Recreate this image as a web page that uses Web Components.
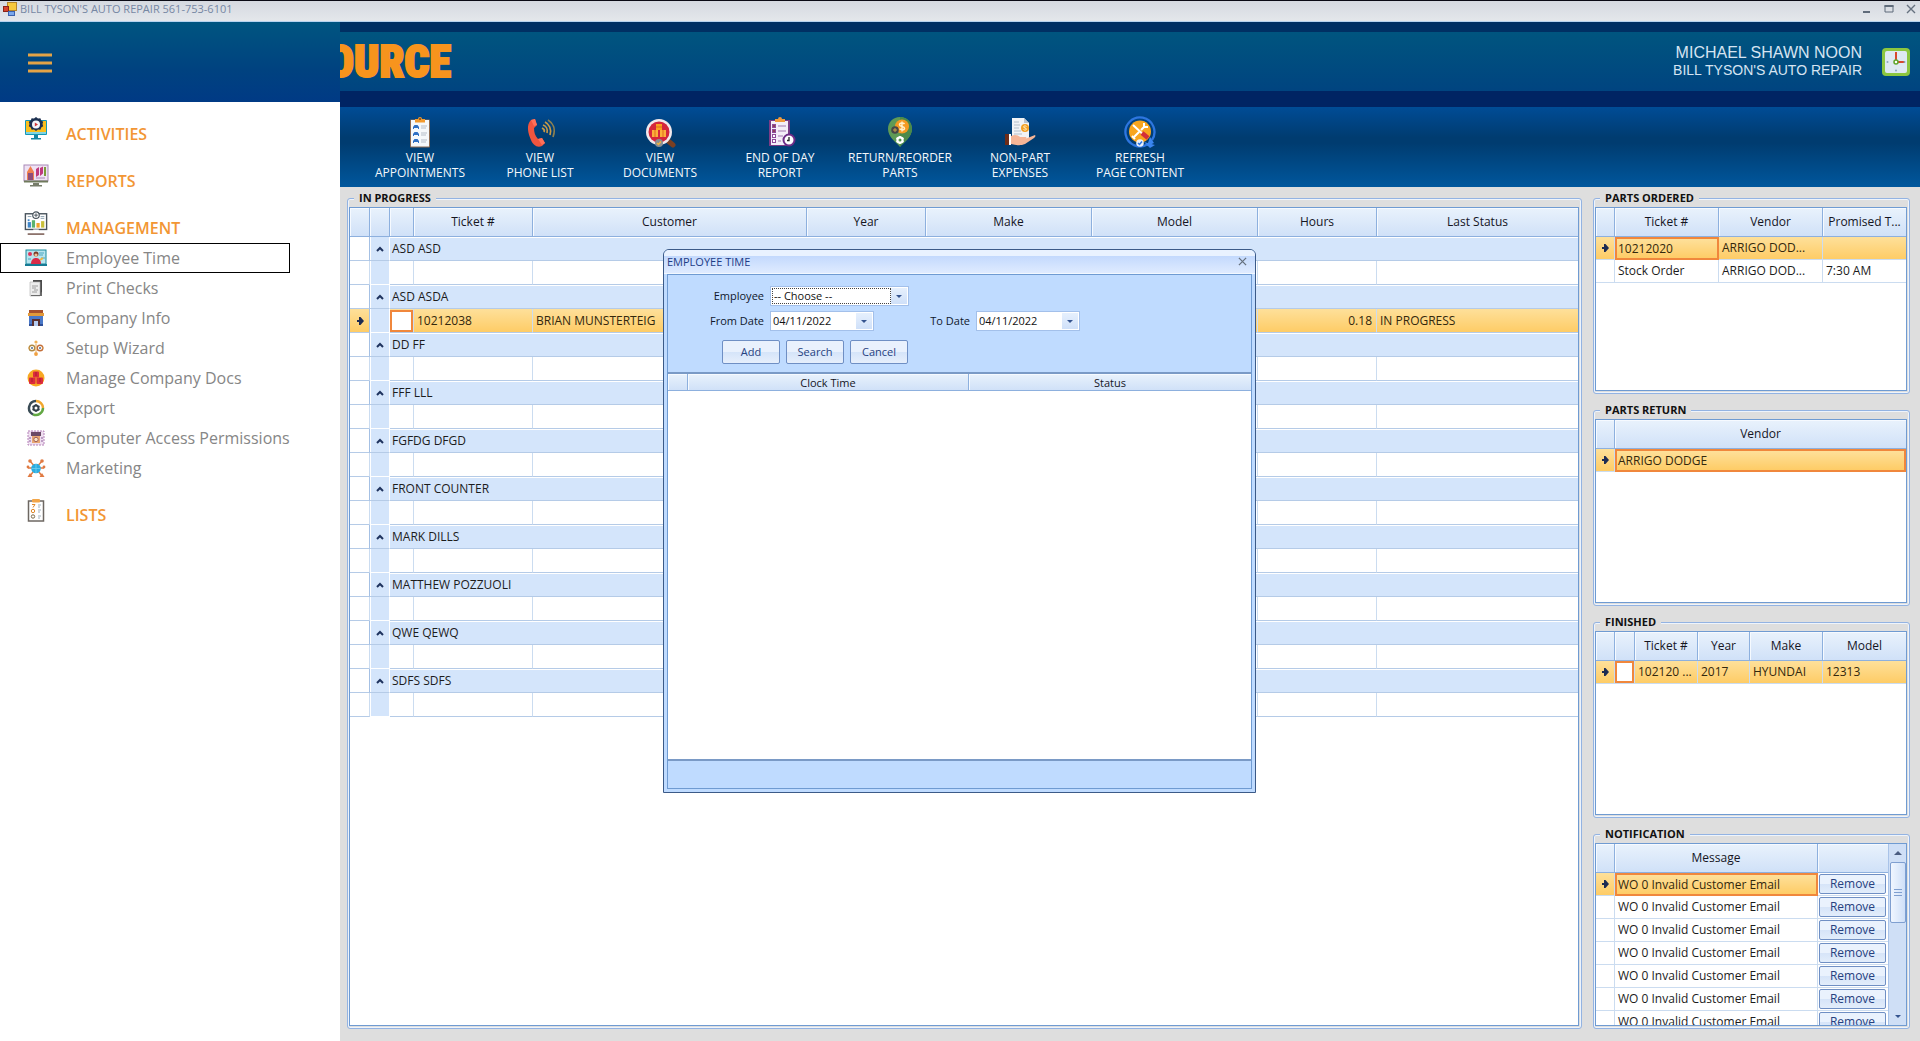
<!DOCTYPE html>
<html lang="en">
<head>
<meta charset="utf-8">
<title>Auto Repair</title>
<style>
html,body{margin:0;height:100%}
body{font:12px/16px "Open Sans","Noto Sans",sans-serif;color:#1c1c1c;background:#dedede;overflow:hidden}
</style>
</head>
<body>
<shop-app></shop-app>
<script>
const ICONS = {
  activities: ['0 0 24 24', `<rect x="1" y="3" width="22" height="15" rx="1" fill="#1597b5"/><rect x="2" y="4" width="20" height="11" fill="#fbbf1c"/><rect x="2" y="15" width="20" height="2" fill="#7fd4e2"/><path d="M10 18h4v3h3v1.500H7V21h3z" fill="#1586a4"/><path d="M12 0l2 1.500 2.400-.2.800 2.300 2 1.200-.7 2.200.7 2.200-2 1.200-.8 2.300-2.400-.2L12 14l-2-1.500-2.400.2-.8-2.300-2-1.200.7-2.200-.7-2.200 2-1.200.8-2.300 2.400.2z" fill="#1c3050"/><circle cx="12" cy="7.500" r="4" fill="#f2f6fb"/><path d="M10.800 5.500l3.200 2-3.200 2z" fill="#d03a3a"/>`],
  reports: ['0 0 26 24', `<rect x="1" y="1" width="24" height="16" fill="#efe2f4" stroke="#a98ab8"/><path d="M4 16V8l3.500-6L11 8v8z" fill="#f08050"/><path d="M5 16V9h5v7z" fill="#8f4d7a"/><path d="M13 5l3-2v8l-3 2zM17 4l3-1.500v7L17 12z" fill="#c0397e"/><path d="M21 3h2v9h-2z" fill="#7b9c3a"/><path d="M13 14h9" stroke="#a98ab8"/><path d="M1 17.500h24" stroke="#6f7a5c" stroke-width="2"/><path d="M10 19h6v2h3v1.500H7V21h3z" fill="#777d6a"/>`],
  management: ['0 0 26 26', `<rect x="1.500" y="3" width="23" height="17" fill="#fff" stroke="#48535c" stroke-width="1.500"/><g fill="#3f86c9"><rect x="4" y="12" width="3.500" height="6"/><rect x="4" y="9" width="2" height="2"/></g><rect x="8.500" y="10" width="3.500" height="8" fill="#5bb36d"/><rect x="13.500" y="13" width="3.500" height="5" fill="#f2a32c"/><rect x="18.500" y="11" width="3.500" height="7" fill="#c9c03a"/><path d="M4 6h4M18 6h4M18 8h4" stroke="#8aa0b0"/><circle cx="13" cy="4.500" r="3.500" fill="#fff" stroke="#48535c" stroke-width="1.300"/><path d="M13 2.500v4M11 4.500h4" stroke="#48535c"/><path d="M10 20h6v3h-6z" fill="#fff"/><path d="M4 25h18" stroke="#6b4a40" stroke-width="1.500"/>`],
  lists: ['0 0 18 24', `<rect x="1.500" y="3" width="15" height="20" fill="#fff" stroke="#6d6762" stroke-width="1.500"/><rect x="5" y="1" width="8" height="3.500" rx="1" fill="#f2a64a"/><path d="M5 6.500h3L6 9.500" stroke="#e08a2c" fill="none"/><circle cx="6" cy="13" r="1.700" fill="none" stroke="#e08a2c"/><circle cx="6" cy="18.500" r="1.700" fill="none" stroke="#7b6a4a"/><path d="M11 7h3M11 9h2M11 12h3M11 14h2M11 18h3M11 20h2" stroke="#9fb0bd"/>`],
  employee: ['0 0 22 18', `<rect x="1" y="1" width="20" height="14" fill="#b9e4ee" stroke="#188a9c"/><circle cx="5" cy="5" r="2" fill="#e0345a"/><path d="M14 4h5M14 6h4M16 9h4M3 10h3" stroke="#4aa7c0"/><circle cx="11" cy="5" r="2.500" fill="#7a3b28"/><circle cx="11" cy="6" r="1.600" fill="#f2c197"/><path d="M6 15c0-5 3-6 5-6s5 1 5 6z" fill="#d92c48"/><path d="M15 11l3-2" stroke="#f0b53c" stroke-width="2"/><path d="M0 15h22v2H0z" fill="#167a94"/>`],
  checks: ['0 0 18 18', `<path d="M6 1h9v13h-2V3H6z" fill="#4a4a4a"/><path d="M3 3h10v14H3z" fill="#ececec" stroke="#b0b0b0" stroke-width=".6"/><path d="M13 14l2-1v4H4v-1h9z" fill="#6a6a6a"/><path d="M5 7h6M5 9h4M7 11h4M5 13h5" stroke="#8b8b8b" stroke-width=".8"/>`],
  company: ['0 0 18 18', `<path d="M2 1h14v6H2z" fill="#a8502c"/><path d="M1 4h16v3H1z" fill="#e29a3a"/><path d="M2 7h14v10H2z" fill="#4a78c8"/><path d="M5 10h8v7H5z" fill="#5b3030"/><path d="M7 12h4v5H7z" fill="#b6cdf2"/><path d="M2 15h3v2H2zM13 15h3v2h-3z" fill="#2f4f98"/>`],
  wizard: ['0 0 18 18', `<g fill="none" stroke-width="1.400"><circle cx="5" cy="9" r="2.800" stroke="#b18a42"/><circle cx="13" cy="9" r="2.800" stroke="#c4703a"/></g><circle cx="5" cy="9" r="1" fill="#4c6c90"/><circle cx="13" cy="9" r="1" fill="#4c6c90"/><circle cx="9" cy="3" r="1.600" fill="#f0b054"/><circle cx="9" cy="15" r="1.900" fill="#f0a040"/><path d="M9 5v8M1 9h2M15 9h2" stroke="#e2a85c"/>`],
  docs: ['0 0 18 18', `<circle cx="9" cy="9" r="8.500" fill="#f7a823"/><g fill="#dc2c3c"><rect x="6" y="2.500" width="6" height="6" rx="1"/><rect x="2" y="8.500" width="6.500" height="6.500" rx="1"/><rect x="9.500" y="8.500" width="6.500" height="6.500" rx="1"/></g><path d="M9 3v4M5 9v4M13 9v4" stroke="#a81a30"/>`],
  export: ['0 0 18 18', `<g fill="none" stroke-width="2.500"><path d="M9 2a7 7 0 0 1 7 7" stroke="#f2a72e"/><path d="M16 9a7 7 0 0 1-10 6.300" stroke="#62a843"/><path d="M6 15.300A7 7 0 0 1 9 2" stroke="#3a4b55"/></g><circle cx="9" cy="9" r="2.500" fill="#fff" stroke="#333f48" stroke-width="2"/><path d="M9 5v1.500M9 11.500V13M5.500 7l1.300.8M11.200 10.200l1.300.8M5.500 11l1.300-.8M11.200 7.800l1.300-.8" stroke="#333f48" stroke-width="1.400"/>`],
  access: ['0 0 18 18', `<rect x="1" y="2" width="16" height="14" fill="#efdff0" stroke="#b481b8" stroke-dasharray="2 1"/><rect x="4" y="3" width="10" height="4" fill="#6b4a66"/><rect x="5" y="7" width="8" height="7" fill="#e9a873"/><circle cx="9" cy="10.500" r="2.200" fill="#fbe6c6" stroke="#a0605a"/><path d="M2 9h2M14 9h2M2 12h2M14 12h2" stroke="#8a5f9a"/>`],
  marketing: ['0 0 20 20', `<path d="M10 10L4 3M10 10l6-7M10 10H2M10 10h8M10 10l-6 8M10 10l6 8" stroke="#e07a42" stroke-width="1.400"/><g fill="#e07a42"><circle cx="4" cy="3" r="1.800"/><circle cx="16" cy="3" r="1.800"/><circle cx="2" cy="9" r="1.400"/><circle cx="18" cy="9" r="1.400"/><path d="M1.500 19l2.500-4 2.500 4zM13.500 19l2.500-4 2.500 4z"/></g><circle cx="10" cy="10.500" r="4.800" fill="#2bacdf"/><path d="M5.500 10.500h9M10 6v9" stroke="#6fd0f2" stroke-width=".8"/>`],
  appointments: ['0 0 32 32', `<rect x="6" y="3.500" width="20" height="28" rx="1" fill="#8d6a52"/><rect x="7" y="4" width="18" height="26.500" fill="#f6f8fb"/><path d="M11 3h3a2 2 0 0 1 4 0h3v3.500H11z" fill="#f39a2e"/><circle cx="16" cy="3" r="1" fill="#7a4a1e"/><g fill="#2f6fc4"><path d="M9 13v-2l1.500-2h3L15 11v2h-1v-1h-4v1zM9 20v-2l1.500-2h3L15 18v2h-1v-1h-4v1zM9 27v-2l1.500-2h3L15 25v2h-1v-1h-4v1z"/></g><path d="M17 10h6M17 12h5M17 17h6M17 19h5M17 24h6M17 26h5" stroke="#b5bdc9"/>`],
  phone: ['0 0 32 32', `<path d="M7 4l4-1 2 6-3 3c0 4 1 8 4 11l4-1 3 5-3 3c-5 2-9-1-11-6C4 17 2 9 7 4z" fill="#f0553f"/><path d="M7 4l4-1 2 6-3 1zM14 23l4-1 3 5-3 2z" fill="#ff7059"/><g fill="none" stroke="#c89a46" stroke-width="1.700"><path d="M19 9c3 1 5 4 4 8M21 6c4 2 7 7 5 13M18 12c2 1 3 2 2 4"/><path d="M24 4c5 3 8 9 5 17" stroke="#8e8150"/></g>`],
  documents: ['0 0 32 32', `<path d="M23 24l6 5" stroke="#7a3f22" stroke-width="5" stroke-linecap="round"/><circle cx="15" cy="16" r="13" fill="#f2e9ec"/><circle cx="15" cy="16" r="10.500" fill="#d5263c"/><path d="M12 8h6v6h-6z" fill="#f9a01f"/><path d="M8 14h6v7H8zM16 14h6v7h-6z" fill="#fbb03b"/><path d="M12 11h6M11 14v7M19 14v7" stroke="#e36a1c"/><circle cx="15" cy="27" r="4" fill="#8b8f93"/><path d="M13 27l1.500 1.500L17 25.500" stroke="#f0b23c" stroke-width="1.500" fill="none"/>`],
  endday: ['0 0 32 32', `<rect x="5" y="4" width="21" height="26" fill="#7a3c86"/><rect x="7" y="5" width="17" height="24" fill="#f4eef8"/><path d="M11 3h3a2 2 0 0 1 4 0h3v3H11z" fill="#f09a3c"/><g fill="#fff" stroke="#8d4b9a"><rect x="8.500" y="8.500" width="3" height="3" fill="#8d4058"/><rect x="8.500" y="13.500" width="3" height="3" fill="#8d4058"/><rect x="8.500" y="18.500" width="3" height="3"/><rect x="8.500" y="23.500" width="3" height="3"/></g><path d="M14 10h8M14 15h8M14 20h5M14 25h3" stroke="#a078ae"/><circle cx="25" cy="24" r="5.500" fill="#fff" stroke="#6d2c86" stroke-width="2"/><path d="M25 21v3.500h-2" stroke="#222" fill="none" stroke-width="1.300"/>`],
  reorder: ['0 0 32 32', `<path d="M16 1c7 0 12 5 12 12 0 8-8 13-12 18C12 26 4 21 4 13 4 6 9 1 16 1z" fill="#5e9a56"/><path d="M16 1c7 0 12 5 12 12 0 8-8 13-12 18z" fill="#4b8a4a"/><circle cx="18" cy="10.500" r="7" fill="#f49a22"/><path d="M20.500 8c-1-1.500-5-1.500-5 .7s5 1.300 5 3.500-4 2-5 .5M18 5.500v10" stroke="#fff0c8" stroke-width="1.500" fill="none"/><circle cx="11" cy="14" r="3.800" fill="#474747"/><path d="M11 12v4M9 14h4" stroke="#c9a24a"/><circle cx="16" cy="24" r="2.600" fill="none" stroke="#fff" stroke-width="2.200"/><path d="M16 20v1.500M16 26.500V28M12.500 22l1.300.8M18.200 25.200l1.300.8M12.500 26l1.300-.8M18.200 22.800l1.300-.8" stroke="#fff" stroke-width="1.600"/>`],
  expenses: ['0 0 32 32', `<path d="M8 2h12l5 5v18H8z" fill="#f1f3f6"/><path d="M20 2l5 5h-5z" fill="#b9c3cf"/><path d="M10 6h5M10 9h6M10 12h5M10 15h7M10 18h8" stroke="#b4bfcb"/><circle cx="21" cy="12" r="4" fill="#f3a024"/><path d="M22.500 10.500c-1-1-3-.6-3 .5s3 .8 3 2-2 1.500-3 .5" stroke="#fff3cf" fill="none"/><path d="M1 18h6v11H1z" fill="#6d2c18"/><path d="M5 18h2v11H5z" fill="#fff"/><path d="M7 20c4-2 7-1 9 1h6c1 1 0 2-1 2l10-4c1 1 0 2-1 3l-9 6c-5 2-9 1-14 0z" fill="#f6b596"/>`],
  refresh: ['0 0 32 32', `<path d="M24 28A14.500 14.500 0 1 1 28 24" fill="none" stroke="#2d76e0" stroke-width="2.300"/><path d="M20 26l11 3-5 3z" fill="#3b86f0"/><path d="M26 21l4 6-7 3z" fill="#3b86f0"/><circle cx="16" cy="15.500" r="11" fill="#f8a51f"/><path d="M9 9l13 12M10 21l5-5" stroke="#fff" stroke-width="2"/><path d="M18 17l6 5" stroke="#d32f3a" stroke-width="4.500"/><path d="M17 14l4-4M20 7v4h4M8 20l3 3" stroke="#fff" stroke-width="2" fill="none"/><circle cx="16" cy="27" r="3.800" fill="#e9f1fb"/><path d="M14 27l1.500 1.500L18 25.500" stroke="#2d76e0" stroke-width="1.500" fill="none"/>`],
  clock: ['0 0 30 30', `<rect x="1" y="1" width="28" height="28" rx="4" fill="#8cc63f"/><rect x="4" y="4" width="22" height="22" rx="2" fill="#dfe9f2"/><path d="M15 5v10h9" stroke="#d9482c" stroke-width="2" fill="none"/><circle cx="15" cy="15" r="2" fill="#fff" stroke="#5fa52c" stroke-width="1.500"/><g fill="#8ba6bd"><circle cx="6.500" cy="15" r="1"/><circle cx="23.500" cy="15" r="1"/><circle cx="15" cy="23.500" r="1"/></g>`],
  app: ['0 0 14 14', `<rect x="4.500" y=".5" width="9" height="8" fill="#f6c83c" stroke="#b6852a"/><rect x=".5" y="4.500" width="5" height="5" fill="#d8432c" stroke="#8a2418"/><rect x="5.500" y="9.500" width="6" height="4" fill="#7aa7ec" stroke="#3b62ad"/>`],
  burger: ['0 0 24 20', `<path d="M0 2h24M0 10h24M0 18h24" stroke="#e4a346" stroke-width="3"/>`],
  arrow: ['0 0 8 8', `<path d="M1 4h4" stroke="#1d2b52" stroke-width="2"/><path d="M3 0h1.500l3.500 4-3.500 4H3z" fill="#1d2b52"/>`],
  chevron: ['0 0 8 6', `<path d="M1 5l3-3 3 3" stroke="#1f335e" stroke-width="2" fill="none"/>`],
  down: ['0 0 8 8', `<path d="M1 3h6L4 6z" fill="#35548f"/>`],
  up: ['0 0 8 8', `<path d="M0 6h8L4 2z" fill="#4a5c80"/>`],
  minimize: ['0 0 10 10', `<path d="M1 8h7" stroke="#5f6b7a" stroke-width="2"/>`],
  maximize: ['0 0 10 10', `<path d="M1 1.500h8V8H1z" stroke="#5f6b7a" fill="none"/><path d="M.5 2h9" stroke="#5f6b7a" stroke-width="2"/>`],
  close: ['0 0 10 10', `<path d="M1 1l8 8M9 1l-8 8" stroke="#66717f" stroke-width="1.400"/>`]
};

class Base extends HTMLElement {
  connectedCallback() {
    if (this.shadowRoot) return;
    this.attachShadow({mode: 'open'}).innerHTML =
      `<style>*{box-sizing:border-box}:host{display:block;box-sizing:border-box}button,input,select{font:inherit;margin:0}${this.css()}</style>${this.html()}`;
  }
  css() { return ''; }
  html() { return '<slot></slot>'; }
  at(n) { return this.getAttribute(n) || ''; }
}
const define = (name, cls) => customElements.define(name, cls);

define('app-icon', class extends Base {
  css() { return `:host{display:inline-block;flex:none;width:${this.at('w')}px;height:${this.at('h') || this.at('w')}px}svg{display:block;width:100%;height:100%}`; }
  html() { const [box, body] = ICONS[this.at('name')]; return `<svg viewBox="${box}" aria-hidden="true">${body}</svg>`; }
});

define('title-bar', class extends Base {
  css() { return `:host{display:flex;align-items:center;height:22px;padding:0 4px 4px 3px;gap:3px;border-top:1px solid #0a0a14;border-bottom:1px solid #b7d3ee;background:linear-gradient(#d5d9e0,#e4e7eb);color:#7687a3}
  .name{flex:1;font-size:11px}nav{display:flex;gap:12px}button{border:0;background:none;padding:0;display:flex}`; }
  html() { return `<app-icon name="app" w="14"></app-icon><span class="name"><slot></slot></span>
  <nav><button aria-label="Minimize"><app-icon name="minimize" w="10"></app-icon></button><button aria-label="Maximize"><app-icon name="maximize" w="10"></app-icon></button><button aria-label="Close"><app-icon name="close" w="10"></app-icon></button></nav>`; }
});

define('nav-item', class extends Base {
  css() { return `a{display:flex;align-items:center;height:30px;width:290px;color:#868686;font-size:16px;text-decoration:none;white-space:nowrap;border:1px solid transparent}
  :host([current]) a{border-color:#000}.pic{width:65px;flex:none;padding-left:4px;display:flex;justify-content:center}`; }
  html() { return `<a href="#"><span class="pic"><app-icon name="${this.at('icon')}" w="${this.at('size') || 18}"></app-icon></span><slot></slot></a>`; }
});

define('nav-group', class extends Base {
  css() { return `h2{margin:0;display:flex;align-items:center;height:30px;font-size:16px;font-weight:600;color:#f29634}
  .pic{width:66px;padding:0 0 10px 5px;display:flex;justify-content:center}`; }
  html() { return `<h2><span class="pic"><app-icon name="${this.at('icon')}" w="${this.at('size') || 24}" h="24"></app-icon></span>${this.at('label')}</h2><slot></slot>`; }
});

define('nav-drawer', class extends Base {
  css() { return `:host{display:flex;flex-direction:column;width:340px;flex:none;background:#fff}
  header{height:80px;padding:2px 28px 0;display:flex;align-items:center;background:linear-gradient(#005580,#004280 60%,#003a85)}
  header button{border:0;background:none;padding:0;display:flex}
  nav{display:flex;flex-direction:column;gap:17px;padding-top:17px}`; }
  html() { return `<header><button aria-label="Menu"><app-icon name="burger" w="24" h="20"></app-icon></button></header><nav><slot></slot></nav>`; }
});

define('top-banner', class extends Base {
  css() { return `:host{display:flex;align-items:center;justify-content:space-between;height:85px;border-top:10px solid #003063;border-bottom:16px solid #002463;background:linear-gradient(#00557f,#004480);padding-right:9px;overflow:hidden}
  .logo{display:flex;justify-content:flex-end;width:111px;font:900 44px/48px "Roboto Condensed","Open Sans Condensed","Liberation Sans Narrow","Roboto",sans-serif;color:#f7941d;-webkit-text-stroke:2px #f7941d}
  .who{display:flex;align-items:center;gap:19px;color:#d6e4f2;font-family:"Liberation Sans",sans-serif;text-align:right}
  .big{font-size:16px;line-height:18px}.small{font-size:14px;line-height:17px}`; }
  html() { return `<div class="logo">SOURCE</div><div class="who"><div><div class="big">MICHAEL SHAWN NOON</div><div class="small">BILL TYSON'S AUTO REPAIR</div></div><app-icon name="clock" w="30"></app-icon></div>`; }
});

define('tool-button', class extends Base {
  css() { return `button{width:120px;height:80px;padding:9px 0 0;border:0;background:none;color:#f4f8fc;display:flex;flex-direction:column;align-items:center;gap:2px;font-size:12px;line-height:15px}span{display:block}`; }
  html() { return `<button><app-icon name="${this.at('icon')}" w="32"></app-icon><span><slot></slot></span></button>`; }
});
define('tool-strip', class extends Base {
  css() { return `:host{display:flex;height:80px;padding-left:20px;background:linear-gradient(#004c96,#003c70 38%,#003c70 45%,#00579d)}`; }
});

define('group-panel', class extends Base {
  css() { return `:host{min-width:0;min-height:0;display:grid}
  fieldset{min-width:0;margin:0;padding:1px 2px 2px 1px;border:1px solid #93b3e2;border-radius:3px;box-shadow:inset 0 0 0 1px #eef4fc;display:grid}
  legend{margin-left:5px;padding:0 5px;font-weight:700;font-size:11px;line-height:16px;color:#111;background:#dedede}`; }
  html() { return `<fieldset><legend>${this.at('label')}</legend><slot></slot></fieldset>`; }
});

const blank = n => Array(n).fill('');
const GRIDS = {
  progress: {
    cols: [['', 20], ['', 20], ['', 24], ['Ticket #', 119], ['Customer', 274], ['Year', 119], ['Make', 166], ['Model', 166], ['Hours', 119], ['Last Status', 0]],
    groups: [['ASD ASD'], ['ASD ASDA', ['10212038', 'BRIAN MUNSTERTEIG', '', '', '', '0.18', 'IN PROGRESS']], ['DD FF'], ['FFF LLL'], ['FGFDG DFGD'], ['FRONT COUNTER'], ['MARK DILLS'], ['MATTHEW POZZUOLI'], ['QWE QEWQ'], ['SDFS SDFS']]
  },
  ordered: {cols: [['', 19], ['Ticket #', 104], ['Vendor', 104], ['Promised T...', 0]], rows: [['10212020', 'ARRIGO DOD...', ''], ['Stock Order', 'ARRIGO DOD...', '7:30 AM']]},
  returned: {cols: [['', 19], ['Vendor', 0]], rows: [['ARRIGO DODGE']]},
  finished: {cols: [['', 19], ['', 20], ['Ticket #', 63], ['Year', 52], ['Make', 73], ['Model', 0]], rows: [['#check', '102120 ...', '2017', 'HYUNDAI', '12313']]},
  notes: {cols: [['', 19], ['Message', 0], ['', 70]], scroll: true, rows: Array.from({length: 7}, () => ['WO 0 Invalid Customer Email', '#remove'])},
  clock: {cols: [['', 20], ['Clock Time', 281], ['Status', 0]], rows: []}
};

define('data-grid', class extends Base {
  css() { return `:host{display:flex;min-width:0;min-height:0;overflow:hidden;background:#fff;border:1px solid #6f9bd2;contain:size}
  :host([name=clock]){flex:1;font-size:11px;border-width:2px 0 0;border-color:#7a9ac6}
  .view{flex:1;min-width:0;overflow:hidden}
  table{width:100%;table-layout:fixed;border-collapse:separate;border-spacing:0}
  th{height:29px;padding:0;font-weight:400;color:#15151f;background:linear-gradient(#e9f2fc,#d0e1f8);border-right:1px solid #8db0de;border-bottom:1px solid #8db0de;box-shadow:inset 1px 1px #f6faff;white-space:nowrap}
  :host([name=clock]) th{height:17px;line-height:15px}
  td{height:23px;padding:0 4px 0 3px;line-height:20px;border-right:1px solid #cbdcf0;border-bottom:1px solid #cbdcf0;white-space:nowrap;overflow:hidden}
  td:last-child,th:last-child{border-right:0}
  td.i{padding:0;text-align:center;line-height:0}
  .grouped td{height:24px;border-bottom-color:#b5cbe7}
  .grouped td.i{border-right-color:#a4c0e4}
  .grouped td.g{background:#d4e5fb;border-right-color:#fff;box-shadow:inset 1px 0 #fff}
  .grouped .empty td.g,.grouped .on td.g{border-bottom-color:#fff;}
  td.lab{background:#d4e5fb;box-shadow:inset 0 1px #fff;padding:0 2px}
  td.c{padding:0}td.c input{appearance:none;display:block;width:100%;height:22px;margin:0;background:#fff;border:2px solid #f0873c}
  .on td{background:linear-gradient(#fee09a,#fecc66);color:#33280d}
  .on td.g{background:#d4e5fb}
  .on td.cur{border:2px solid #f0873c;padding:0 1px;line-height:18px}
  .r{text-align:right}
  td.b{padding:1px 2px 1px 1px}
  td.b button{display:block;width:100%;height:20px;padding:0;line-height:16px;color:#26417f;border:1px solid #6f8fc4;border-radius:2px;background:linear-gradient(#eaf2fd 50%,#d6e4f8 50%,#e2edfb)}
  .on td.b{background:#fff}
  .bar{width:18px;background:#cfdff6;border-left:1px solid #a9c3e8;display:flex;flex-direction:column;align-items:center;padding:5px 0;gap:5px}
  .thumb{width:16px;height:61px;border:1px solid #7f9fd0;border-radius:2px;background:linear-gradient(90deg,#f0f6ff,#cfe0f8);display:grid;place-content:center;gap:2px}
  .thumb i{width:8px;height:1px;background:#7f9fd0}
  .bar .end{margin-top:auto}`; }
  html() {
    const g = GRIDS[this.at('name')];
    const arrow = '<app-icon name="arrow" w="8"></app-icon>';
    const check = '<td class="c"><input type="checkbox" aria-label="Select row"></td>';
    const head = g.cols.map(c => `<th>${c[0]}</th>`).join('');
    const colg = g.cols.map(c => c[1] ? `<col style="width:${c[1]}px">` : '<col>').join('');
    let body;
    if (g.groups) {
      body = g.groups.map(([label, row]) =>
        `<tr><td class="i"></td><td class="g i"><app-icon name="chevron" w="8" h="6"></app-icon></td><td class="lab" colspan="8">${label}</td></tr>` +
        (row ? `<tr class="on"><td class="i">${arrow}</td><td class="g"></td>${check}${row.map((t, n) => `<td class="${n === 5 ? 'r' : ''}">${t}</td>`).join('')}</tr>`
             : `<tr class="empty"><td></td><td class="g"></td>${blank(8).map(() => '<td></td>').join('')}</tr>`)).join('');
    } else {
      body = g.rows.map((r, k) => `<tr class="${k ? '' : 'on'}"><td class="i">${k ? '' : arrow}</td>${r.map((t, n) =>
        t === '#check' ? check : t === '#remove' ? '<td class="b"><button>Remove</button></td>' : `<td class="${!k && !n ? 'cur' : ''}">${t}</td>`).join('')}</tr>`).join('');
    }
    return `<div class="view"><table class="${g.groups ? 'grouped' : ''}"><colgroup>${colg}</colgroup><thead><tr>${head}</tr></thead><tbody>${body}</tbody></table></div>` +
      (g.scroll ? `<div class="bar"><app-icon name="up" w="8"></app-icon><div class="thumb"><i></i><i></i><i></i></div><app-icon class="end" name="down" w="8"></app-icon></div>` : '');
  }
});

define('form-field', class extends Base {
  css() { return `:host{display:flex;align-items:center;gap:6px}
  label{width:96px;text-align:right;color:#10182c}
  .box{display:flex;height:20px;width:104px;background:#fff;border:1px solid #a3c0ea;padding:1px}
  :host([kind=select]) .box{width:139px}
  input,select{flex:1;min-width:0;width:0;border:0;padding:0 1px;background:none;appearance:none;color:#111;outline:none;height:16px;line-height:16px}
  select{outline:1px dotted #444;outline-offset:-1px;padding:0 2px}
  .drop{width:16px;padding:0;border:0;background:linear-gradient(#e6f0fd,#cfe0f9);display:grid;place-content:center}`; }
  html() {
    const control = this.at('kind') === 'select'
      ? `<select id="f"><option>${this.at('value')}</option></select>`
      : `<input id="f" type="text" value="${this.at('value')}">`;
    return `<label for="f">${this.at('label')}</label><span class="box">${control}<button class="drop" tabindex="-1" aria-label="Open ${this.at('label')}"><app-icon name="down" w="8"></app-icon></button></span>`;
  }
});

define('employee-dialog', class extends Base {
  css() { return `:host{position:absolute;left:663px;top:249px;width:593px;height:544px;display:flex;flex-direction:column;background:#bfdbff;border:1px solid #3b5a88;border-radius:6px 6px 0 0;padding:0 3px 3px;font-size:11px;overflow:hidden}
  header{display:flex;align-items:center;justify-content:space-between;height:24px;margin:0 -3px;padding:0 8px 0 3px;background:linear-gradient(#e9f2ff 6px,#c3d9fd 6px,#dfebff);border-bottom:1px solid #f2f8ff;color:#1d3c86}
  header button{border:0;background:none;padding:0;display:flex}
  main{flex:1;min-height:0;display:flex;flex-direction:column;border:1px solid #6f9bd2}
  form{padding:11px 0 8px;height:97px;display:flex;flex-direction:column;gap:5px}
  .row{display:flex}
  .acts{display:flex;gap:6px;padding:4px 0 0 54px}
  .acts button{width:58px;height:24px;padding:0;border:1px solid #6f8fc4;border-radius:2px;color:#26417f;background:linear-gradient(#e9f1fd 50%,#d5e4f9 50%,#e6effc)}
  footer{height:29px;border-top:2px solid #7a9ac6}`; }
  html() { return `<header><span>EMPLOYEE TIME</span><button aria-label="Close"><app-icon name="close" w="9"></app-icon></button></header>
  <main><form onsubmit="return false"><form-field kind="select" label="Employee" value="-- Choose --"></form-field>
  <div class="row"><form-field label="From Date" value="04/11/2022"></form-field><form-field label="To Date" value="04/11/2022"></form-field></div>
  <div class="acts"><button>Add</button><button>Search</button><button>Cancel</button></div></form>
  <data-grid name="clock"></data-grid><footer></footer></main>`; }
});

define('shop-app', class extends Base {
  css() { return `:host{display:flex;flex-direction:column;height:100vh;position:relative}
  .body{flex:1;min-height:0;display:flex}
  .work{flex:1;min-width:0;display:flex;flex-direction:column}
  .panels{flex:1;min-height:0;display:grid;grid-template-columns:minmax(0,1fr) 317px;gap:11px;padding:3px 10px 12px 7px}
  .side{display:grid;grid-template-rows:repeat(3,204px) minmax(0,1fr);gap:8px;min-height:0}`; }
  html() { return `<title-bar>BILL TYSON'S AUTO REPAIR 561-753-6101</title-bar>
  <div class="body">
    <nav-drawer>
      <nav-group icon="activities" label="ACTIVITIES"></nav-group>
      <nav-group icon="reports" size="26" label="REPORTS"></nav-group>
      <nav-group icon="management" size="26" label="MANAGEMENT">
        <nav-item icon="employee" size="22" current>Employee Time</nav-item>
        <nav-item icon="checks">Print Checks</nav-item>
        <nav-item icon="company">Company Info</nav-item>
        <nav-item icon="wizard">Setup Wizard</nav-item>
        <nav-item icon="docs">Manage Company Docs</nav-item>
        <nav-item icon="export">Export</nav-item>
        <nav-item icon="access">Computer Access Permissions</nav-item>
        <nav-item icon="marketing" size="20">Marketing</nav-item>
      </nav-group>
      <nav-group icon="lists" label="LISTS"></nav-group>
    </nav-drawer>
    <div class="work">
      <top-banner></top-banner>
      <tool-strip>
        <tool-button icon="appointments">VIEW<br>APPOINTMENTS</tool-button>
        <tool-button icon="phone">VIEW<br>PHONE LIST</tool-button>
        <tool-button icon="documents">VIEW<br>DOCUMENTS</tool-button>
        <tool-button icon="endday">END OF DAY<br>REPORT</tool-button>
        <tool-button icon="reorder">RETURN/REORDER<br>PARTS</tool-button>
        <tool-button icon="expenses">NON-PART<br>EXPENSES</tool-button>
        <tool-button icon="refresh">REFRESH<br>PAGE CONTENT</tool-button>
      </tool-strip>
      <div class="panels">
        <group-panel label="IN PROGRESS"><data-grid name="progress"></data-grid></group-panel>
        <div class="side">
          <group-panel label="PARTS ORDERED"><data-grid name="ordered"></data-grid></group-panel>
          <group-panel label="PARTS RETURN"><data-grid name="returned"></data-grid></group-panel>
          <group-panel label="FINISHED"><data-grid name="finished"></data-grid></group-panel>
          <group-panel label="NOTIFICATION"><data-grid name="notes"></data-grid></group-panel>
        </div>
      </div>
    </div>
  </div>
  <employee-dialog></employee-dialog>`; }
});
</script>
</body>
</html>
